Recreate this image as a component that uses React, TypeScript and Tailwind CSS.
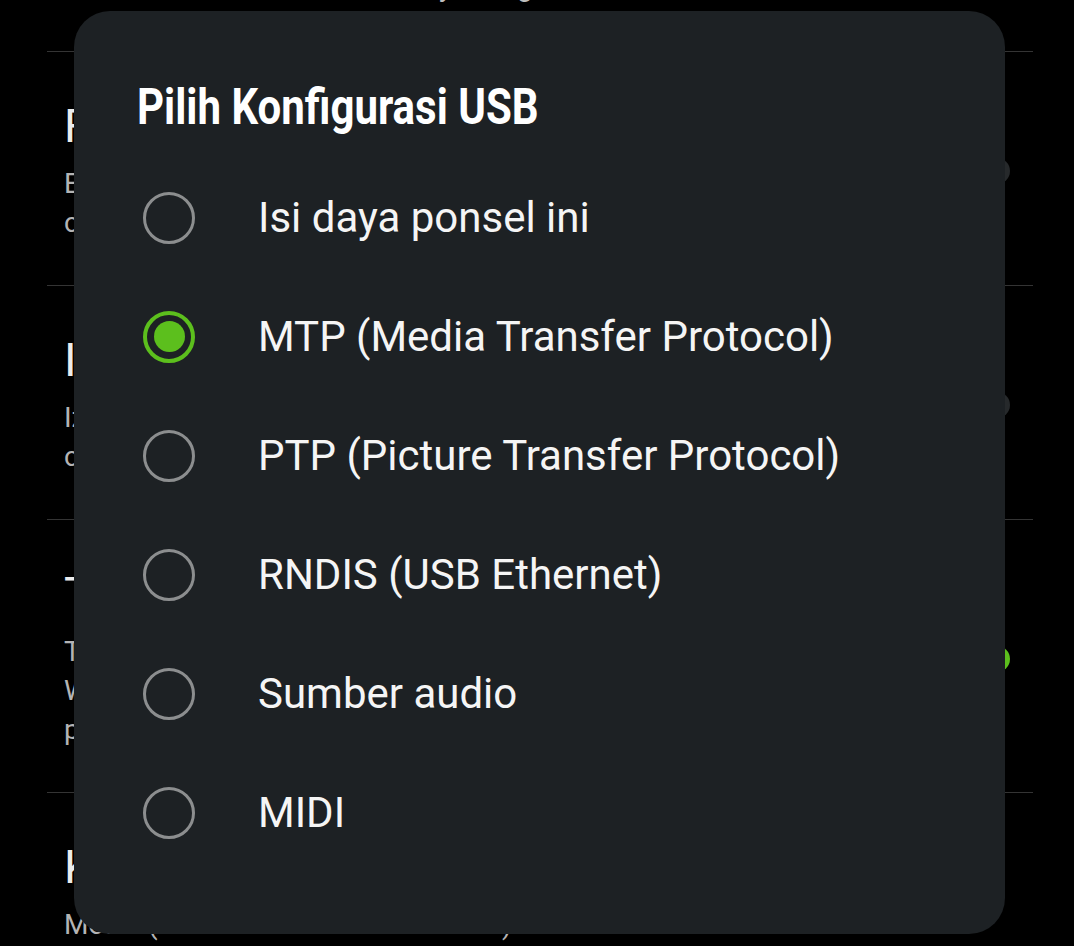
import React from "react";

const options = [
  "Isi daya ponsel ini",
  "MTP (Media Transfer Protocol)",
  "PTP (Picture Transfer Protocol)",
  "RNDIS (USB Ethernet)",
  "Sumber audio",
  "MIDI",
];

function Section({
  title,
  lines,
  toggle,
}: {
  title: string;
  lines: string[];
  toggle?: "on" | "off";
}) {
  return (
    <div className="flex items-center border-b border-[#343434] pl-[17px] pr-[23px] pt-[48px] pb-[43px]">
      <div className="flex min-w-0 flex-1 flex-col">
        <div className="whitespace-nowrap text-[46px] leading-[52px] text-[#ececec]">{title}</div>
        <div className="mt-[12px] flex flex-col">
          {lines.map((l, i) => (
            <div key={i} className="whitespace-nowrap text-[28px] leading-[39px] text-[#b4b4b4]">
              {l}
            </div>
          ))}
        </div>
      </div>
      {toggle === "on" && <div className="h-[26px] w-[56px] shrink-0 rounded-full bg-[#5cbf1d]" />}
      {toggle === "off" && <div className="h-[26px] w-[56px] shrink-0 rounded-full bg-[#26292b]" />}
    </div>
  );
}

function Radio({ checked }: { checked: boolean }) {
  if (checked) {
    return (
      <div className="ml-[9px] flex h-[52px] w-[52px] shrink-0 items-center justify-center rounded-full border-[4px] border-[#5cbf1d]">
        <div className="h-[31px] w-[31px] rounded-full bg-[#5cbf1d]" />
      </div>
    );
  }
  return <div className="ml-[9px] h-[52px] w-[52px] shrink-0 rounded-full border-[3px] border-[#8c8e8f]" />;
}

export default function App() {
  return (
    <div className="relative h-[946px] w-full overflow-hidden bg-black font-['Roboto',sans-serif]">
      <div className="flex flex-col pl-[47px] pr-[41px]">
        <div className="flex h-[52px] items-start border-b border-[#343434] pl-[17px]">
          <div className="-mt-[33px] whitespace-nowrap text-[28px] leading-[39px] text-[#bdbdbd]">
            Aktifkan koneksi USB ketika layar tergembok
          </div>
        </div>
        <Section
          title="Fungsi debugging USB"
          lines={["Eksekusi debugging saat USB tersambung ke komputer", "cadangan data akan tetap aman"]}
          toggle="off"
        />
        <Section
          title="Instal via USB"
          lines={["Izinkan penginstalan aplikasi melalui USB", "cakupan keamanan aplikasi tetap berlaku"]}
          toggle="off"
        />
        <Section
          title="Tetap aktif"
          lines={["Tetap aktifkan layar saat mengisi daya", "Wi-Fi tetap tersambung saat layar mati", "ponsel tidak akan masuk mode tidur"]}
          toggle="on"
        />
        <Section title="Konfigurasi USB default" lines={["Media (Transfer file dan media USB)"]} />
      </div>

      <div className="absolute left-[74px] top-[11px] h-[923px] w-[931px] rounded-[36px] bg-[#1d2124] pl-[60px] pt-[66px]">
        <div className="ml-[3px] h-[60px] origin-left scale-x-[0.84] whitespace-nowrap text-[50px] font-bold leading-[60px] text-white">
          Pilih Konfigurasi USB
        </div>
        <div className="mt-[21px] flex flex-col">
          {options.map((o, i) => (
            <div key={o} className="flex h-[119px] items-center">
              <Radio checked={i === 1} />
              <span className="ml-[63px] whitespace-nowrap text-[42px] text-[#f5f5f5]">{o}</span>
            </div>
          ))}
        </div>
      </div>
    </div>
  );
}
